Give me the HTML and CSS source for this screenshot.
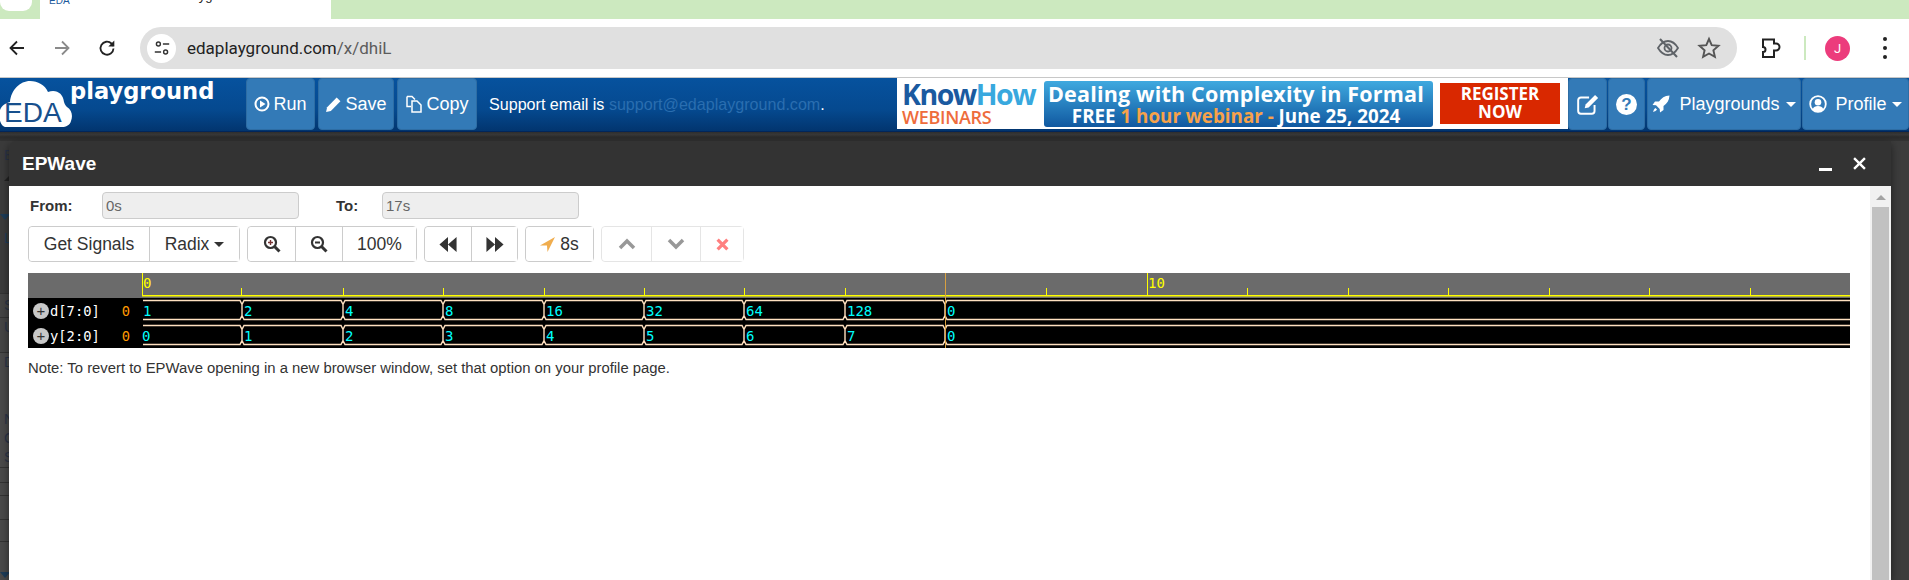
FILE: index.html
```html
<!DOCTYPE html>
<html lang="en">
<head>
    <meta charset="UTF-8">
    <title>EDA Playground - EPWave</title>
    <link rel="stylesheet" href="styles.css">
</head>
<body>
    <div class="tabstrip">
        <div class="tab-prev"><div class="tab-prev-inner"></div></div>
        <div class="tab"><span class="tab-eda">EDA</span><span class="tab-title">Playground</span></div>
        <div class="tab-rest"></div>
    </div>

    <div class="toolbar">
        <svg class="ti ti-back" viewBox="0 0 20 20"><path d="M17 10H4M10 3.500L3.500 10l6.500 6.500" fill="none" stroke="#222" stroke-width="1.800"/></svg>
        <svg class="ti ti-fwd" viewBox="0 0 20 20"><path d="M3 10h13M10 3.500l6.500 6.500-6.500 6.500" fill="none" stroke="#8a8a8a" stroke-width="1.800"/></svg>
        <svg class="ti ti-reload" viewBox="0 0 20 20"><path d="M16.500 10.500a6.500 6.500 0 1 1-2-5L16.500 8" fill="none" stroke="#222" stroke-width="1.800"/><path d="M17.300 2.500v6h-6z" fill="#222"/></svg>
        <div class="omnibox">
            <div class="tune">
                <svg viewBox="0 0 20 20" width="18" height="18"><circle cx="6" cy="5.500" r="2.200" fill="none" stroke="#333" stroke-width="1.600"/><path d="M11 5.500h7M2 14.500h7" stroke="#333" stroke-width="1.600"/><circle cx="14" cy="14.500" r="2.200" fill="none" stroke="#333" stroke-width="1.600"/></svg>
            </div>
            <span class="url">edaplayground.com<span class="url-path">/x/dhiL</span></span>
            <svg class="omni-eye" viewBox="0 0 24 24" width="24" height="24"><path d="M2 12c3-5 6.500-7 10-7s7 2 10 7c-3 5-6.500 7-10 7s-7-2-10-7z" fill="none" stroke="#5f6368" stroke-width="1.800"/><circle cx="12" cy="12" r="3.500" fill="none" stroke="#5f6368" stroke-width="1.800"/><path d="M4 3l17 18" stroke="#5f6368" stroke-width="2"/></svg>
            <svg class="omni-star" viewBox="0 0 24 24" width="24" height="24"><path d="M12 3l2.700 6.200 6.800.6-5.100 4.500 1.500 6.600L12 17.500l-5.900 3.400 1.500-6.600L2.500 9.800l6.800-.6z" fill="none" stroke="#555" stroke-width="1.900"/></svg>
        </div>
        <svg class="ti ti-ext" viewBox="0 0 24 24"><path d="M4 3.500h11v4h2a2.500 2.500 0 0 1 0 7h-2v6.500H4v-5a2.500 2.500 0 0 0 0-5z" fill="none" stroke="#222" stroke-width="2"/></svg>
        <div class="tool-sep"></div>
        <div class="avatar">J</div>
        <div class="dots"><i></i><i></i><i></i></div>
    </div>

    <nav class="navbar">
        <svg class="logo" viewBox="0 0 218 53" width="218" height="53">
            <path d="M6 49C0 49-2 38 0 32c2-5 6-7 10-8C11 12 20 3 30 3c8 0 15 4 18 11 8-3 15 1 16 10 1 3 2 4 3 5 5 3 6 9 4 14-1 4-5 6-9 6z" fill="#fff"/>
            <text class="logo-eda" x="4" y="44">EDA</text>
            <text class="logo-play" x="70" y="21">playground</text>
        </svg>
        <button class="nav-btn btn-run"><svg viewBox="0 0 16 16" width="16" height="16"><circle cx="8" cy="8" r="6.500" fill="none" stroke="#fff" stroke-width="2"/><path d="M6 4.500l5.500 3.500L6 11.500z" fill="#fff"/></svg>Run</button>
        <button class="nav-btn btn-save"><svg viewBox="0 0 16 16" width="17" height="17"><path d="M1 15l1-4.500L11 1.500l3.500 3.500-9 9z" fill="#fff"/></svg>Save</button>
        <button class="nav-btn btn-copy"><svg viewBox="0 0 18 18" width="18" height="18"><path d="M2 1.500h5l3 3M2 1.500v10h4M7 6h5l4 4v7H7z" fill="none" stroke="#fff" stroke-width="1.500"/></svg>Copy</button>
        <p class="support">Support email is <a href="#">support@edaplayground.com</a>.</p>
        <div class="banner">
            <div class="kh">
                <div class="kh-name"><span class="kh-know">Know</span><span class="kh-how">How</span></div>
                <div class="kh-web">WEBINARS</div>
            </div>
            <div class="ad">
                <div class="ad-big">Dealing with Complexity in Formal</div>
                <div class="ad-small">FREE <span class="ad-hl">1 hour webinar -</span> June 25, 2024</div>
            </div>
            <div class="ad-reg">REGISTER<br>NOW</div>
        </div>
        <button class="nav-btn btn-edit"><svg viewBox="0 0 22 22" width="24" height="24"><path d="M17 12v5.500a2.500 2.500 0 0 1-2.500 2.500h-10A2.500 2.500 0 0 1 2 17.500v-10A2.500 2.500 0 0 1 4.500 5H12" fill="none" stroke="#fff" stroke-width="1.800"/><path d="M8 15l.8-3.500L17.500 2.800l2.800 2.800-8.700 8.700z" fill="#fff"/></svg></button>
        <button class="nav-btn btn-help"><span class="help-dot">?</span></button>
        <button class="nav-btn btn-play"><svg viewBox="0 0 18 18" width="18" height="18"><path d="M17.500.5c-5 .3-8 2.500-10.500 6H3L.5 10l3.500.3 3.700 3.700.3 3.500 3.500-2.500v-4c3.500-2.500 5.700-5.500 6-10.500zM3.500 13C2 14 1.500 15.500 1 17c1.500-.5 3-1 4-2.500z" fill="#fff"/></svg>Playgrounds<i class="caret"></i></button>
        <button class="nav-btn btn-profile"><svg viewBox="0 0 18 18" width="18" height="18"><circle cx="9" cy="9" r="7.800" fill="none" stroke="#fff" stroke-width="1.800"/><circle cx="9" cy="7.200" r="3.300" fill="#fff"/><path d="M3.500 14.500c1-2.800 3-3.500 5.500-3.500s4.500.7 5.500 3.500C13 16 11 16.800 9 16.800S5 16 3.500 14.500z" fill="#fff"/></svg>Profile<i class="caret"></i></button>
    </nav>

    <main class="behind">
        <div class="behind-top"></div>
        <div class="behind-row">
            <div class="edge">
                <span class="e-txt e1">E</span>
                <i class="e-tri e2"></i>
                <i class="e-tri e3"></i>
                <span class="e-txt e4">L</span>
                <span class="e-txt e5">S</span>
                <span class="e-txt e6">U</span>
                <span class="e-txt e7">D</span>
                <span class="e-txt e8">N</span>
                <span class="e-txt e9">C</span>
                <span class="e-txt e9">S</span>
                <i class="e-tri e10"></i>
            </div>
            <section class="modal">
                <header class="modal-head">
                    <h4>EPWave</h4>
                    <span class="win-min"></span>
                    <svg class="win-close" viewBox="0 0 12 12" width="13" height="13"><path d="M1 1l10 10M11 1L1 11" stroke="#fff" stroke-width="2.200"/></svg>
                </header>
                <div class="modal-body">
                    <div class="content">
                        <div class="range">
                            <label class="lbl-from">From:</label>
                            <input class="inp" type="text" value="0s" disabled>
                            <label class="lbl-to">To:</label>
                            <input class="inp" type="text" value="17s" disabled>
                        </div>
                        <div class="btnbar">
                            <div class="group">
                                <button class="btn b-signals">Get Signals</button>
                                <button class="btn b-radix">Radix<i class="caret dark"></i></button>
                            </div>
                            <div class="group">
                                <button class="btn b-zoom"><svg viewBox="0 0 18 18" width="18" height="18"><circle cx="7.500" cy="7.500" r="5.500" fill="none" stroke="#333" stroke-width="2.200"/><path d="M11.500 11.500l5 5" stroke="#333" stroke-width="3"/><path d="M5 7.500h5M7.500 5v5" stroke="#733" stroke-width="1.400"/></svg></button>
                                <button class="btn b-zoom"><svg viewBox="0 0 18 18" width="18" height="18"><circle cx="7.500" cy="7.500" r="5.500" fill="none" stroke="#333" stroke-width="2.200"/><path d="M11.500 11.500l5 5" stroke="#333" stroke-width="3"/><path d="M5 7.500h5" stroke="#333" stroke-width="1.800"/></svg></button>
                                <button class="btn b-pct">100%</button>
                            </div>
                            <div class="group">
                                <button class="btn b-step"><svg viewBox="0 0 18 14" width="20" height="15"><path d="M9 0v14L1 7zM17 0v14L9 7z" fill="#333"/></svg></button>
                                <button class="btn b-step"><svg viewBox="0 0 18 14" width="20" height="15"><path d="M1 0v14l8-7zM9 0v14l8-7z" fill="#333"/></svg></button>
                            </div>
                            <div class="group">
                                <button class="btn b-cursor"><svg viewBox="0 0 14 14" width="15" height="15"><path d="M14 0L0 8h6.500L7 14z" fill="#f0ad4e"/></svg>8s</button>
                            </div>
                            <div class="group off">
                                <button class="btn b-move"><svg viewBox="0 0 18 12" width="18" height="12"><path d="M2 10l7-7 7 7" fill="none" stroke="#333" stroke-width="3.500"/></svg></button>
                                <button class="btn b-move"><svg viewBox="0 0 18 12" width="18" height="12"><path d="M2 2l7 7 7-7" fill="none" stroke="#333" stroke-width="3.500"/></svg></button>
                                <button class="btn b-del"><svg viewBox="0 0 12 12" width="13" height="13"><path d="M1.500 1.500l9 9M10.500 1.500l-9 9" stroke="#f00" stroke-width="3"/></svg></button>
                            </div>
                        </div>

                        <div class="wave">
                            <div class="names">
                                <div class="names-head"></div>
                                <div class="sig"><span class="plus">+</span><span class="sig-name">d[7:0]</span><span class="sig-val">0</span></div>
                                <div class="sig"><span class="plus">+</span><span class="sig-name">y[2:0]</span><span class="sig-val">0</span></div>
                            </div>
                            <svg class="wave-plot" width="1708" height="75" viewBox="0 0 1708 75">
                                <defs>
                                    <path id="bus" d="M1 .5H98l2 4v11l-2 4H1M102 .5H199l2 4v11l-2 4H102l-2-4v-11zM203 .5H299l2 4v11l-2 4H203l-2-4v-11zM303 .5H400l2 4v11l-2 4H303l-2-4v-11zM404 .5H500l2 4v11l-2 4H404l-2-4v-11zM504 .5H600l2 4v11l-2 4H504l-2-4v-11zM604 .5H701l2 4v11l-2 4H604l-2-4v-11zM705 .5H801l2 4v11l-2 4H705l-2-4v-11zM1708 .5H805l-2 4v11l2 4H1708"/>
                                </defs>
                                <rect class="plot-head" width="1708" height="25"/>
                                <rect class="plot-bg" y="25" width="1708" height="50"/>
                                <path class="ticks" d="M.5 0v23M99.500 15v8M201.500 15v8M301.500 15v8M402.500 15v8M502.500 15v8M602.500 15v8M703.500 15v8M904.500 15v8M1005.500 0v23M1105.500 15v8M1206.500 15v8M1306.500 15v8M1407.500 15v8M1507.500 15v8M1608.500 15v8"/>
                                <rect class="ruler" y="22" width="1708" height="1.500"/>
                                <text class="t-label" x="1" y="15">0</text>
                                <text class="t-label" x="1006" y="15">10</text>
                                <use href="#bus" class="bus" y="27"/>
                                <use href="#bus" class="bus" y="52"/>
                                <path class="cursor" d="M803.500 0v75"/>
                                <g class="b-text">
                                    <text x="1" y="43">1</text><text x="102" y="43">2</text><text x="203" y="43">4</text><text x="303" y="43">8</text><text x="404" y="43">16</text><text x="504" y="43">32</text><text x="604" y="43">64</text><text x="705" y="43">128</text><text x="805" y="43">0</text>
                                    <text x="0" y="68">0</text><text x="102" y="68">1</text><text x="203" y="68">2</text><text x="303" y="68">3</text><text x="404" y="68">4</text><text x="504" y="68">5</text><text x="604" y="68">6</text><text x="705" y="68">7</text><text x="805" y="68">0</text>
                                </g>
                            </svg>
                        </div>
                        <p class="note">Note: To revert to EPWave opening in a new browser window, set that option on your profile page.</p>
                    </div>
                    <div class="scrollbar">
                        <div class="scroll-up"></div>
                        <div class="scroll-thumb"></div>
                    </div>
                </div>
            </section>
            <div class="edge-right"></div>
        </div>
    </main>
</body>
</html>
```

FILE: styles.css
```css
* { box-sizing: border-box; }
html, body { margin: 0; height: 580px; overflow: hidden; }
body { font-family: "Liberation Sans", Arial, sans-serif; display: flex; flex-direction: column; background: #fff; }
button { font-family: inherit; }

/* browser chrome */
.tabstrip { display: flex; height: 19px; flex: none; background: #cce9bf; overflow: hidden; }
.tab-prev { width: 40px; background: #cce9bf; border-bottom-right-radius: 10px; }
.tab-prev-inner { width: 32px; height: 11px; background: #fff; border-radius: 0 0 9px 9px; }
.tab { width: 291px; background: #fff; font-size: 10px; color: #1d5a9c; position: relative; }
.tab-eda { display: block; margin: -5px 0 0 9px; line-height: 12px; }
.tab-title { position: absolute; left: 140px; top: -12px; font-size: 13px; color: #222; }
.tab-rest { flex: 1; background: #cce9bf; border-bottom-left-radius: 14px; }

.toolbar { height: 58px; flex: none; display: flex; align-items: center; background: #fff; border-top-right-radius: 8px; padding: 0 0 0 7px; }
.ti { flex: none; width: 20px; height: 20px; }
.ti-fwd { margin-left: 25px; }
.ti-reload { margin-left: 25px; }
.omnibox { width: 1597px; height: 42px; margin-left: 23px; border-radius: 21px; background: #e0e0e0; display: flex; align-items: center; padding: 0 16px 0 7px; }
.tune { width: 29px; height: 29px; border-radius: 50%; background: #fff; display: flex; align-items: center; justify-content: center; flex: none; }
.url { font-family: Roboto, sans-serif; font-size: 17px; color: #222; margin-left: 11px; }
.url-path { color: #5c5c5c; }
.omni-eye { margin-left: auto; }
.omni-star { margin-left: 17px; }
.ti-ext { width: 24px; height: 24px; margin-left: 22px; }
.tool-sep { width: 2px; height: 24px; background: #cce9bf; margin-left: 21px; }
.avatar { width: 25px; height: 25px; border-radius: 50%; background: #ec3c7c; color: #fff; font-size: 13px; text-align: center; line-height: 25px; margin-left: 19px; font-family: Roboto, sans-serif; }
.dots { display: flex; flex-direction: column; gap: 5px; margin-left: 33px; }
.dots i { width: 4px; height: 4px; background: #222; border-radius: 50%; }

/* navbar */
.navbar { height: 55px; flex: none; display: flex; align-items: flex-start; border-top: 1px solid #c8c8c8; border-bottom: 1px solid #02265a; background: linear-gradient(#06529e, #05498f 60%, #02356f); }
.logo { flex: none; width: 218px; margin-right: 28px; overflow: visible; }
.logo-eda { font-family: "Liberation Sans", sans-serif; font-size: 28px; fill: #17508d; }
.logo-play { font-family: "DejaVu Sans", sans-serif; font-weight: 700; font-size: 22.600px; fill: #fff; }
.nav-btn { height: 52px; border: 1px solid #2e6da4; border-radius: 4px; background: #337ab7; color: #fff; font-size: 18px; display: flex; align-items: center; justify-content: center; gap: 3px; padding: 0; margin-right: 3px; flex: none; }
.btn-run { width: 69px; }
.btn-save { width: 76px; }
.btn-copy { width: 80px; margin-right: 0; }
.support { margin: 17px 0 0 12px; width: 408px; font-size: 16.100px; color: #fff; flex: none; }
.support a { color: #2a6eb0; text-decoration: none; }
.banner { width: 671px; height: 51px; flex: none; background: #fff; display: flex; align-items: center; }
.kh { width: 147px; padding-left: 5px; font-family: "Open Sans", sans-serif; font-weight: 700; flex: none; }
.kh-name { font-size: 28.500px; line-height: 28px; letter-spacing: -1.500px; }
.kh-know { color: #1a5aa0; }
.kh-how { color: #38a8de; }
.kh-web { font-size: 18px; line-height: 19px; color: #ee6c3c; letter-spacing: -.3px; font-weight: 600; }
.ad { width: 389px; height: 46px; padding-right: 5px; background: linear-gradient(#3fa9df, #1058a0); border-radius: 3px; color: #fff; text-align: center; font-family: "Open Sans", sans-serif; font-weight: 700; flex: none; }
.ad-big { font-size: 21.500px; line-height: 25px; letter-spacing: .2px; }
.ad-small { font-size: 18.800px; line-height: 20px; }
.ad-hl { color: #f7a24a; }
.ad-reg { width: 120px; height: 41px; margin-left: 7px; background: #d92800; color: #fff; text-align: center; font-family: "Open Sans", sans-serif; font-weight: 700; font-size: 17px; line-height: 18px; padding-top: 2px; flex: none; }
.btn-edit { width: 39px; margin-right: 1px; }
.btn-help { width: 37px; margin-right: 2px; }
.help-dot { width: 21px; height: 21px; border-radius: 50%; background: #fff; color: #337ab7; font-size: 17px; font-weight: 700; line-height: 21px; text-align: center; }
.btn-play { width: 154px; gap: 9px; margin-right: 1px; }
.btn-profile { width: 107px; gap: 8px; margin-right: 0; }
.caret { width: 0; height: 0; border-top: 5px solid #fff; border-left: 5px solid transparent; border-right: 5px solid transparent; margin-left: -3px; }
.caret.dark { border-top-color: #333; margin-left: 5px; }

/* dimmed page + modal */
.behind { flex: 1; display: flex; flex-direction: column; background: #3c3c3c; min-height: 0; }
.behind-top { height: 9px; flex: none; background: linear-gradient(#2e2e2e, #383838 30%, #2b2b2b 55%, #333); }
.behind-row { flex: 1; display: flex; min-height: 0; }
.edge { width: 9px; flex: none; overflow: hidden; display: flex; flex-direction: column; align-items: flex-start; background: linear-gradient(#3b3b3b 152px, #333 152px, #333 153px, #454545 153px, #454545 176px, #333 176px, #333 177px, #454545 177px, #454545 211px, #333 211px, #333 212px, #4a4a4a 212px, #4a4a4a 326px, #333 326px, #333 327px, #4a4a4a 327px, #4a4a4a 341px, #333 341px, #333 342px, #4a4a4a 342px, #4a4a4a 354px, #333 354px, #333 355px, #4a4a4a 355px, #4a4a4a 378px, #333 378px, #333 379px, #4a4a4a 379px, #4a4a4a 400px, #333 400px, #333 401px, #4a4a4a 401px); }
.e-txt { font-size: 14px; line-height: 14px; margin-left: 4px; color: #2a3347; flex: none; }
.e-tri { width: 0; height: 0; flex: none; border-left: 5px solid transparent; border-right: 5px solid transparent; }
.e1 { margin-top: 7px; }
.e2 { margin: 14px 0 0 4px; border-bottom: 5px solid #222; }
.e3 { margin-top: 33px; border-top: 6px solid #1d3c58; }
.e4 { margin-top: 11px; color: #1d3c58; }
.e5 { margin-top: 53px; }
.e6 { margin-top: 8px; }
.e7 { margin-top: 21px; }
.e8 { margin-top: 43px; }
.e9 { margin-top: 5px; }
.e10 { margin-top: 108px; border-top: 6px solid #1d3c58; }
.edge-right { width: 18px; flex: none; }
.modal { flex: 1; min-width: 0; display: flex; flex-direction: column; border-top-left-radius: 6px; box-shadow: 0 3px 9px rgba(0, 0, 0, .5); overflow: hidden; }
.modal-head { height: 45px; flex: none; background: #333; display: flex; align-items: center; color: #fff; padding: 0 0 0 13px; }
.modal-head h4 { margin: 0; font-size: 19px; font-weight: 700; }
.win-min { width: 13px; height: 3px; background: #fff; margin: 12px 0 0 auto; }
.win-close { margin: 0 25px 0 21px; }
.modal-body { flex: 1; display: flex; background: #fff; min-height: 0; }
.content { flex: 1; min-width: 0; padding: 6px 20px 0 19px; }

.range { display: flex; align-items: center; height: 27px; }
.range label { font-size: 15px; font-weight: 700; color: #333; }
.lbl-from { width: 74px; padding-left: 2px; }
.lbl-to { width: 46px; margin-left: 37px; }
.inp { height: 27px; width: 197px; padding: 2px 3px; border: 1px solid #ccc; border-radius: 4px; background: #eee; font: 15px "Liberation Sans", sans-serif; color: #666; }

.btnbar { display: flex; gap: 7px; margin-top: 7px; }
.group { display: flex; height: 36px; border: 1px solid #ccc; border-radius: 4px; }
.group.off { opacity: .5; }
.btn { background: #fff; border: 0; border-left: 1px solid #ccc; padding: 0; font-size: 17.500px; color: #333; display: flex; align-items: center; justify-content: center; height: 100%; }
.group .btn:first-child { border-left: 0; border-radius: 4px 0 0 4px; }
.b-signals { width: 120px; }
.b-radix { width: 90px; }
.b-zoom { width: 47px; }
.b-pct { width: 74px; }
.b-step { width: 46px; }
.b-cursor { width: 67px; gap: 5px; }
.b-move { width: 49px; }
.b-del { width: 43px; }

/* wave view */
.wave { display: flex; margin-top: 11px; height: 75px; }
.names { width: 114px; flex: none; background: #000; }
.names-head { height: 25px; background: #6b6b6b; }
.sig { height: 25px; display: flex; align-items: center; padding-left: 5px; font-family: "DejaVu Sans Mono", monospace; font-size: 13.800px; color: #fff; }
.plus { width: 16px; height: 16px; border-radius: 50%; background: #c8c8c8; color: #333; font-family: "Liberation Sans", sans-serif; font-size: 15px; line-height: 15px; text-align: center; flex: none; }
.sig-name { margin-left: 1px; }
.sig-val { margin-left: auto; margin-right: 12px; color: #f90; }
.wave-plot { display: block; flex: none; }
.plot-head { fill: #6b6b6b; }
.plot-bg { fill: #000; }
.ticks { stroke: #ff0; fill: none; }
.ruler { fill: #ff0; }
.t-label { font-family: "DejaVu Sans Mono", monospace; font-size: 14px; fill: #ff0; }
.bus { stroke: #ffe0c0; stroke-width: 1.400; fill: none; }
.cursor { stroke: #d8a040; }
.b-text text { font-family: "DejaVu Sans Mono", monospace; font-size: 14px; fill: #0ff; }
.note { margin: 12px 0 0; font-size: 14.850px; color: #333; }

.scrollbar { width: 21px; flex: none; background: #f1f1f1; padding: 0 2px; }
.scroll-up { width: 0; height: 0; border-left: 5px solid transparent; border-right: 5px solid transparent; border-bottom: 5px solid #a3a3a3; margin: 9px auto 7px; }
.scroll-thumb { height: 400px; background: #c1c1c1; }
```
